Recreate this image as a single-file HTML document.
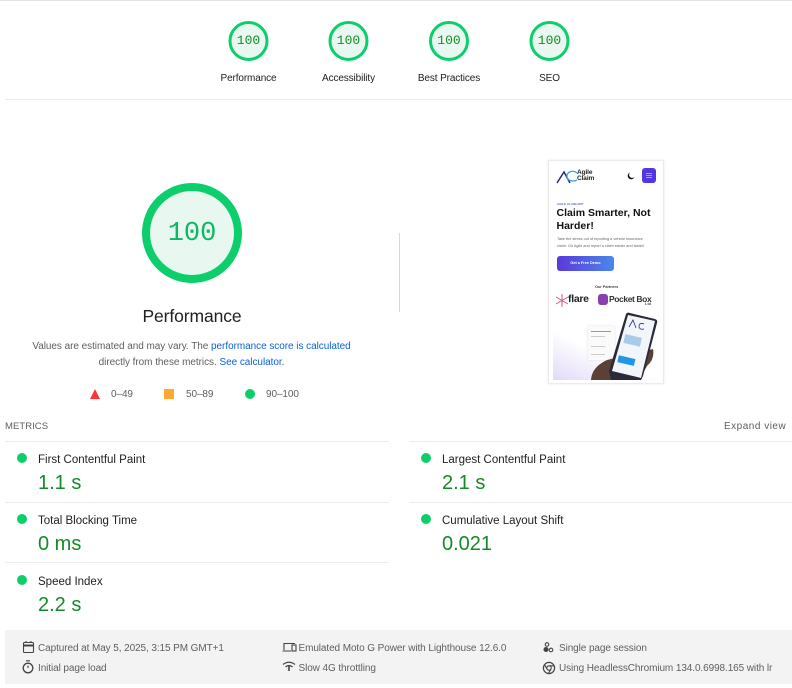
<!DOCTYPE html>
<html lang="en"><head><meta charset="utf-8"><title>Lighthouse Report</title>
<style>
html,body{margin:0;padding:0;background:#fff}
body{width:792px;height:688px;position:relative;overflow:hidden;font-family:"Liberation Sans",sans-serif;color:#212121}
.a{position:absolute;white-space:nowrap}
.c{transform:translateX(-50%)}
.mono{font-family:"Liberation Mono",monospace}
.line{position:absolute;height:1px;background:#ebebeb}
.lab{font-size:10px;line-height:14px;letter-spacing:-.12px;color:#212121}
.mt{font-size:11.5px;line-height:16px;color:#212121}
.mv{font-size:20px;line-height:26px;color:#168a26}
.dot{position:absolute;width:10px;height:10px;border-radius:50%;background:#0cce6b}
.f{font-size:10px;line-height:14px;letter-spacing:-.09px;color:#5f5f5f}
svg{position:absolute;overflow:visible}
a{color:#0b63d8;text-decoration:none}
</style></head><body>
<div class="line" style="left:0;top:0;width:792px;background:#e4e4e4"></div>

<svg style="left:0;top:0" width="792" height="110">
<g fill="#e8f8f0" stroke="#0cce6b" stroke-width="3">
<circle cx="248.500" cy="41" r="18.500"/><circle cx="348.500" cy="41" r="18.500"/><circle cx="449" cy="41" r="18.500"/><circle cx="549.500" cy="41" r="18.500"/>
</g></svg>
<div class="a c mono" style="left:248.500px;top:33px;font-size:13px;line-height:16px;color:#168a26">100</div>
<div class="a c mono" style="left:348.500px;top:33px;font-size:13px;line-height:16px;color:#168a26">100</div>
<div class="a c mono" style="left:449px;top:33px;font-size:13px;line-height:16px;color:#168a26">100</div>
<div class="a c mono" style="left:549.500px;top:33px;font-size:13px;line-height:16px;color:#168a26">100</div>
<div class="a c lab" style="left:248.500px;top:72px">Performance</div>
<div class="a c lab" style="left:348.500px;top:72px">Accessibility</div>
<div class="a c lab" style="left:449px;top:72px">Best Practices</div>
<div class="a c lab" style="left:549.500px;top:72px">SEO</div>
<div class="line" style="left:5px;top:99px;width:787px"></div>

<svg style="left:0;top:0" width="300" height="300"><circle cx="192" cy="233" r="46" fill="#e8f8f0" stroke="#0cce6b" stroke-width="8"/></svg>
<div class="a c mono" style="left:192px;top:217.500px;font-size:27px;line-height:32px;color:#0cb863">100</div>
<div class="a c" style="left:192px;top:304.500px;font-size:17.500px;line-height:23px;letter-spacing:-.1px;color:#212121">Performance</div>
<div class="a c" style="left:191.500px;top:338.500px;font-size:10px;line-height:16px;letter-spacing:-.05px;color:#5f5f5f">Values are estimated and may vary. The <a>performance score is calculated</a></div>
<div class="a c" style="left:191.500px;top:354.500px;font-size:10px;line-height:16px;letter-spacing:-.05px;color:#5f5f5f">directly from these metrics. <a>See calculator.</a></div>

<svg style="left:0;top:0" width="300" height="410"><polygon points="90,399 95,389 100,399" fill="#f33"/><rect x="164" y="389" width="10" height="10" fill="#ffa733"/><circle cx="250" cy="394" r="5" fill="#0cce6b"/></svg>
<div class="a f" style="left:111px;top:388px">0–49</div>
<div class="a f" style="left:186px;top:388px">50–89</div>
<div class="a f" style="left:266px;top:388px">90–100</div>

<div class="line" style="left:399px;top:233px;width:1px;height:79px;background:#d9d9d9"></div>

<!-- phone screenshot -->
<div class="a" style="left:548px;top:160px;width:116px;height:224px;background:#fff;border:1px solid #ebebeb;box-sizing:border-box;box-shadow:0 0 2px #e6e6e6;overflow:hidden">
  <svg style="left:7px;top:8px" width="22" height="16" viewBox="0 0 22 16"><path d="M1 14L8 3L14 14" fill="none" stroke="#2a2c80" stroke-width="1.500"/><path d="M21 4C16 0 10 4 11 8C12 12 17 13 21 11" fill="none" stroke="#3aa0e0" stroke-width="1.300"/></svg>
  <div class="a" style="left:28px;top:9px;font-size:6.500px;line-height:6px;font-weight:bold;letter-spacing:-.1px;color:#222">Agile<br>Claim</div>
  <svg style="left:78px;top:11px" width="8" height="8" viewBox="0 0 8 8"><path d="M3 .5A3.500 3.500 0 1 0 7.500 5A3 3 0 0 1 3 .5Z" fill="#111"/></svg>
  <div class="a" style="left:93px;top:7px;width:14px;height:15px;border-radius:3px;background:#5138e0"></div>
  <div class="a" style="left:97px;top:12px;width:6px;height:5px;background:repeating-linear-gradient(#a99cf0 0 1px,#5138e0 1px 2px)"></div>
  <div class="a" style="left:8px;top:41px;font-size:3px;line-height:4px;color:#5a68c8;font-weight:bold">AGILE CLAIM APP</div>
  <div class="a" style="left:7.500px;top:46px;font-size:10.500px;line-height:12.500px;font-weight:bold;color:#111">Claim Smarter, Not<br>Harder!</div>
  <div class="a" style="left:8px;top:75px;font-size:3.800px;line-height:6.500px;color:#666">Take the stress out of reporting a vehicle insurance<br>claim. Go Agile and report a claim easier and faster!</div>
  <div class="a" style="left:8px;top:95px;width:57px;height:15px;border-radius:3px;background:linear-gradient(90deg,#5a38dc,#4a88ea);color:#fff;font-size:3.800px;line-height:15px;text-align:center;font-weight:bold">Get a Free Demo</div>
  <div class="a" style="left:46px;top:124px;font-size:3.800px;line-height:5px;color:#444;font-weight:bold">Our Partners</div>
  <svg style="left:7px;top:133px" width="12" height="13" viewBox="0 0 12 13"><path d="M6 0V13M0 3L12 10M0 10L12 3" stroke="#e0557a" stroke-width="1"/></svg>
  <div class="a" style="left:19px;top:132px;font-size:10.500px;line-height:13px;font-weight:bold;color:#222;letter-spacing:-.3px">flare</div>
  <div class="a" style="left:49px;top:133px;width:10px;height:11px;border-radius:3px;background:#8a3fb0"></div>
  <div class="a" style="left:60px;top:132px;font-size:8.500px;line-height:12px;font-weight:bold;color:#333;letter-spacing:-.4px">Pocket Box</div>
  <div class="a" style="left:96px;top:140px;font-size:4px;line-height:5px;font-weight:bold;color:#555">Ltd</div>
  <div class="a" style="left:4px;top:170px;width:108px;height:49px;background:linear-gradient(205deg,#fff 50%,#e2daf8 100%)"></div>
  <div class="a" style="left:39px;top:165px;width:27px;height:34px;background:#fafafa;box-shadow:0 0 2px #ddd"></div>
  <div class="a" style="left:42px;top:170px;width:20px;height:1px;background:#999"></div>
  <div class="a" style="left:42px;top:175px;width:14px;height:1px;background:#ccc"></div>
  <div class="a" style="left:42px;top:185px;width:14px;height:1px;background:#ccc"></div>
  <div class="a" style="left:42px;top:193px;width:14px;height:1px;background:#ccc"></div>
  <svg style="left:0;top:0" width="116" height="224">
    <path d="M42 219C43 208 50 203 58 199L70 196L104 188Q106 198 98 205L90 219Z" fill="#5b4038"/>
    <path d="M77 153Q78 151 81 152L106 158Q109 159 108 162L94 215L92 219L62 219L60 210Z" fill="#2a2a38"/>
    <path d="M79 154L106 160L92 217L63 210Z" fill="#f2f6fa"/>
    <rect x="69" y="196" width="17" height="7" fill="#2196e8" transform="rotate(13 77 199)"/>
    <rect x="75" y="175" width="17" height="9" fill="#a8cce8" transform="rotate(13 84 180)"/>
    <path d="M80 166L84 159L87 167M95 163Q90 161 90 166Q91 169 95 168" fill="none" stroke="#2a2c80" stroke-width=".800"/>
  </svg>
</div>

<div class="a" style="left:5px;top:420px;font-size:9.500px;line-height:13px;letter-spacing:.05px;color:#5f5f5f">METRICS</div>
<div class="a" style="left:724px;top:420px;font-size:10px;line-height:13px;letter-spacing:.5px;color:#5f5f5f">Expand view</div>

<div class="line" style="left:5px;top:441px;width:384px"></div>
<div class="line" style="left:409px;top:441px;width:383px"></div>
<div class="line" style="left:5px;top:502px;width:384px"></div>
<div class="line" style="left:409px;top:502px;width:383px"></div>
<div class="line" style="left:5px;top:562px;width:384px"></div>

<div class="dot" style="left:17px;top:453px"></div>
<div class="a mt" style="left:38px;top:451.500px">First Contentful Paint</div>
<div class="a mv" style="left:38px;top:470px">1.1 s</div>
<div class="dot" style="left:17px;top:514px"></div>
<div class="a mt" style="left:38px;top:512.500px">Total Blocking Time</div>
<div class="a mv" style="left:38px;top:531px">0 ms</div>
<div class="dot" style="left:17px;top:575px"></div>
<div class="a mt" style="left:38px;top:573.500px">Speed Index</div>
<div class="a mv" style="left:38px;top:592px">2.2 s</div>
<div class="dot" style="left:421px;top:453px"></div>
<div class="a mt" style="left:442px;top:451.500px">Largest Contentful Paint</div>
<div class="a mv" style="left:442px;top:470px">2.1 s</div>
<div class="dot" style="left:421px;top:514px"></div>
<div class="a mt" style="left:442px;top:512.500px">Cumulative Layout Shift</div>
<div class="a mv" style="left:442px;top:531px">0.021</div>

<div class="a" style="left:5px;top:630px;width:787px;height:54px;background:#f3f3f3"></div>
<svg style="left:0;top:0" width="792" height="688" fill="none" stroke="#444" stroke-width="1.100">
  <rect x="23.500" y="642.500" width="10" height="10" rx="1"/><path d="M23.500 645.500H33.500" stroke-width="2"/><path d="M26 641V643M31 641V643"/>
  <circle cx="28" cy="668" r="4.800" stroke-width="1.300"/><path d="M26 660.800H30M28 665.500V668"/>
  <path d="M284 650V643.500H295M282.500 651H291"/><rect x="292" y="645" width="4" height="6"/>
  <path d="M283 664.500Q289 660 295 664.500M285.500 667Q289 664 292.500 667" stroke-width="1.300"/><path d="M289 666V671" stroke-width="1.600"/>
  <circle cx="547" cy="644.500" r="1.800"/><circle cx="546" cy="649.500" r="2" fill="#444"/><circle cx="551" cy="650" r="1.800"/>
  <circle cx="549" cy="668" r="5.600" stroke-width="1.200"/><circle cx="549" cy="668" r="2.200"/><path d="M549 665.800H554M547 669L544.700 665M551 669L548.500 673.400"/>
</svg>
<div class="a f" style="left:38px;top:642px">Captured at May 5, 2025, 3:15 PM GMT+1</div>
<div class="a f" style="left:38px;top:662px">Initial page load</div>
<div class="a f" style="left:298.500px;top:642px">Emulated Moto G Power with Lighthouse 12.6.0</div>
<div class="a f" style="left:298.500px;top:662px">Slow 4G throttling</div>
<div class="a f" style="left:559px;top:642px">Single page session</div>
<div class="a f" style="left:559px;top:662px">Using HeadlessChromium 134.0.6998.165 with lr</div>
</body></html>
